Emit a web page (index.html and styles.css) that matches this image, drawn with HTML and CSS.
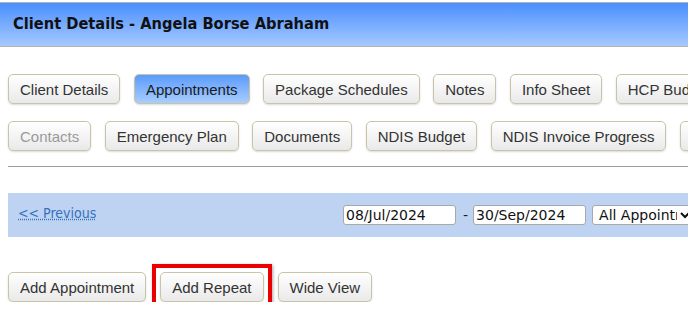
FILE: index.html
```html
<!DOCTYPE html>
<html lang="en">
<head>
    <meta charset="UTF-8">
    <title>Client Details - Angela Borse Abraham</title>
    <link rel="stylesheet" href="styles.css">
</head>
<body>
    <div class="title-bar">Client Details - Angela Borse Abraham</div>

    <div class="content">
        <!-- Tabs -->
        <div class="tab-row">
            <button class="btn">Client Details</button>
            <button class="btn active">Appointments</button>
            <button class="btn">Package Schedules</button>
            <button class="btn">Notes</button>
            <button class="btn">Info Sheet</button>
            <button class="btn">HCP Budget</button>
        </div>
        <div class="tab-row">
            <button class="btn disabled">Contacts</button>
            <button class="btn">Emergency Plan</button>
            <button class="btn">Documents</button>
            <button class="btn">NDIS Budget</button>
            <button class="btn">NDIS Invoice Progress</button>
            <button class="btn">Reports</button>
        </div>
        <div class="divider"></div>

        <!-- Date filter -->
        <div class="filter-bar">
            <div class="prev-cell"><a href="#" class="prev-link">&lt;&lt; Previous</a></div>
            <input type="text" class="date-input" value="08/Jul/2024">
            <span class="dash">-</span>
            <input type="text" class="date-input" value="30/Sep/2024">
            <select class="type-select">
                <option>All Appointments</option>
                <option>Scheduled</option>
                <option>Cancelled</option>
            </select>
        </div>

        <div class="action-row">
            <button class="btn">Add Appointment</button>
            <div class="highlight-frame">
                <button class="btn">Add Repeat</button>
            </div>
            <button class="btn">Wide View</button>
        </div>
    </div>
</body>
</html>
```

FILE: styles.css
```css
body {
    margin: 0;
    background-color: white;
    font-family: "Liberation Sans", Arial, sans-serif;
    overflow: hidden;
}
.title-bar {
    box-sizing: border-box;
    margin-top: 2px;
    height: 45px;
    border-top: 1px solid #b4b4b4;
    border-bottom: 1px solid #b4b4b4;
    background: linear-gradient(#4a8ffd, #a6c9ff);
    padding-left: 13px;
    padding-bottom: 2px;
    display: flex;
    align-items: center;
    font-family: "DejaVu Sans Condensed", "DejaVu Sans", sans-serif;
    font-weight: bold;
    font-size: 16.3px;
    color: #111;
    white-space: nowrap;
}
.content {
    padding: 27px 0 0 8px;
}
.tab-row {
    display: flex;
    gap: 13.5px;
    margin-bottom: 17px;
}
.tab-row + .tab-row {
    margin-bottom: 15px;
}
.btn {
    flex: none;
    box-sizing: border-box;
    height: 30px;
    padding: 0 11px;
    font-family: "Liberation Sans", Arial, sans-serif;
    font-size: 15px;
    color: #333;
    background: linear-gradient(#ffffff, #e9e9e9);
    border: 1px solid #c9c4a6;
    border-radius: 5px;
    box-shadow: 0 1px 2px rgba(0, 0, 0, 0.15);
    white-space: nowrap;
    cursor: pointer;
}
.btn.active {
    background: linear-gradient(#5a9bfc, #a9cdff);
    color: #1a1a1a;
}
.btn.disabled {
    color: #9a9a9a;
}
.divider {
    border-top: 1px solid #9c9c9c;
}
.filter-bar {
    margin-top: 26px;
    height: 44px;
    background-color: #bed3f1;
    display: flex;
    align-items: center;
    padding-left: 10px;
    font-family: "DejaVu Sans", sans-serif;
    font-size: 14px;
}
.prev-cell {
    flex: none;
    width: 325px;
    padding-bottom: 4px;
}
.prev-link {
    font-family: "DejaVu Sans Condensed", "DejaVu Sans", sans-serif;
    font-size: 14px;
    color: #3372bd;
    text-decoration: underline dotted;
}
.date-input {
    flex: none;
    box-sizing: border-box;
    width: 113px;
    height: 20px;
    padding: 0 2px;
    border: 1px solid #a8a8a8;
    border-radius: 3px;
    font-family: "DejaVu Sans", sans-serif;
    font-size: 14px;
    color: #111;
    background: white;
}
.dash {
    margin: 0 5px 0 7px;
    color: #222;
}
.type-select {
    flex: none;
    box-sizing: border-box;
    width: 102px;
    height: 20px;
    margin-left: 6px;
    padding: 0 0 0 2px;
    border: 1px solid #a8a8a8;
    border-radius: 3px;
    font-family: "DejaVu Sans", sans-serif;
    font-size: 14px;
    color: #111;
    background: white;
}
.action-row {
    display: flex;
    align-items: flex-start;
    gap: 14px;
    margin-top: 35px;
}
/* red annotation frame round the button */
.highlight-frame {
    flex: none;
    box-sizing: border-box;
    height: 46px;
    margin: -8px;
    padding: 4px;
    border: 4px solid #ea0000;
    box-shadow: 1px 1px 3px rgba(0, 0, 0, 0.35);
}
.highlight-frame .btn {
    display: block;
}
```
